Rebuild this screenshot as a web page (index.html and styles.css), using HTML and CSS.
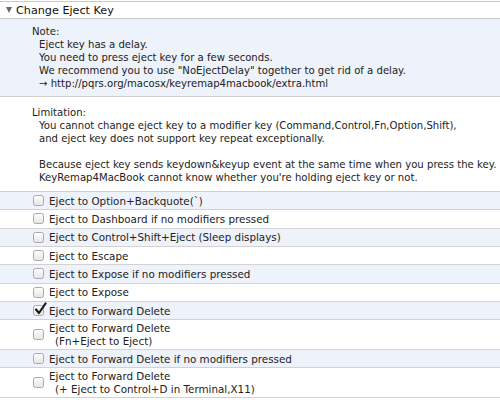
FILE: index.html
```html
<!DOCTYPE html>
<html>
<head>
<meta charset="utf-8">
<link rel="stylesheet" href="styles.css">
</head>
<body>
<div class="tree">
  <div class="header">
    <span class="disclosure"></span>
    <span class="title">Change Eject Key</span>
  </div>
  <div class="block note">
    <div class="line">Note:</div>
    <div class="line ind">Eject key has a delay.</div>
    <div class="line ind">You need to press eject key for a few seconds.</div>
    <div class="line ind">We recommend you to use "NoEjectDelay" together to get rid of a delay.</div>
    <div class="line ind">→ http://pqrs.org/macosx/keyremap4macbook/extra.html</div>
  </div>
  <div class="block limit">
    <div class="line">Limitation:</div>
    <div class="line ind">You cannot change eject key to a modifier key (Command,Control,Fn,Option,Shift),</div>
    <div class="line ind">and eject key does not support key repeat exceptionally.</div>
    <div class="line ind">&nbsp;</div>
    <div class="line ind">Because eject key sends keydown&amp;keyup event at the same time when you press the key.</div>
    <div class="line ind">KeyRemap4MacBook cannot know whether you're holding eject key or not.</div>
  </div>
  <div class="row alt"><span class="cb"></span><span class="label">Eject to Option+Backquote(`)</span></div>
  <div class="row"><span class="cb"></span><span class="label">Eject to Dashboard if no modifiers pressed</span></div>
  <div class="row alt"><span class="cb"></span><span class="label">Eject to Control+Shift+Eject (Sleep displays)</span></div>
  <div class="row"><span class="cb"></span><span class="label">Eject to Escape</span></div>
  <div class="row alt"><span class="cb"></span><span class="label">Eject to Expose if no modifiers pressed</span></div>
  <div class="row"><span class="cb"></span><span class="label">Eject to Expose</span></div>
  <div class="row alt"><span class="cb checked"><svg viewBox="0 0 14 14" width="14" height="14"><path d="M3 7.5 L6 11 L12.5 1.5" fill="none" stroke="#1a1a1a" stroke-width="2.2" stroke-linecap="round" stroke-linejoin="round"/></svg></span><span class="label">Eject to Forward Delete</span></div>
  <div class="row two"><span class="cb"></span><span class="label">Eject to Forward Delete<br><span class="sub">(Fn+Eject to Eject)</span></span></div>
  <div class="row alt"><span class="cb"></span><span class="label">Eject to Forward Delete if no modifiers pressed</span></div>
  <div class="row two last"><span class="cb"></span><span class="label">Eject to Forward Delete<br><span class="sub">(+ Eject to Control+D in Terminal,X11)</span></span></div>
</div>
</body>
</html>
```
FILE: styles.css
```css
html, body {
  margin: 0;
  padding: 0;
  background: #ffffff;
}
body {
  font-family: "DejaVu Sans", sans-serif;
  font-size: 10.1px;
  color: #222222;
  width: 500px;
  height: 405px;
  overflow: hidden;
}
.tree {
  padding-top: 1px;
}
.header {
  height: 16px;
  border-top: 1px solid #c9c9c9;
  border-bottom: 1px solid #c9c9c9;
  display: flex;
  align-items: center;
  background: #ffffff;
}
.disclosure {
  width: 0;
  height: 0;
  margin-left: 6px;
  margin-right: 4px;
  border-left: 3.5px solid transparent;
  border-right: 3.5px solid transparent;
  border-top: 6px solid #6a6a6a;
}
.title {
  font-size: 11.2px;
  color: #111111;
}
.block {
  border-bottom: 1px solid #cfcfcf;
  padding-left: 32px;
  line-height: 13px;
  box-sizing: border-box;
}
.note {
  background: #edf2fb;
  height: 78px;
  padding-top: 6px;
}
.limit {
  background: #ffffff;
  height: 95px;
  padding-top: 9px;
}
.line {
  white-space: nowrap;
}
.ind {
  padding-left: 7px;
}
.row {
  height: 18.33px;
  box-sizing: border-box;
  border-bottom: 1px solid #d2d2d2;
  display: flex;
  align-items: center;
  padding-left: 33px;
  background: #ffffff;
}
.row.alt {
  background: #edf2fb;
}
.row.two {
  height: 29.8px;
  line-height: 13px;
}
.cb {
  width: 11px;
  height: 11px;
  box-sizing: border-box;
  border: 1px solid #a9a9a9;
  border-radius: 2.5px;
  background: linear-gradient(#fdfdfd, #e6e6e6);
  margin-right: 5px;
  flex: none;
  position: relative;
}
.cb.checked svg {
  position: absolute;
  left: -1px;
  top: -4px;
}
.label {
  white-space: nowrap;
  font-size: 10.35px;
}
.sub {
  padding-left: 6px;
}
```
